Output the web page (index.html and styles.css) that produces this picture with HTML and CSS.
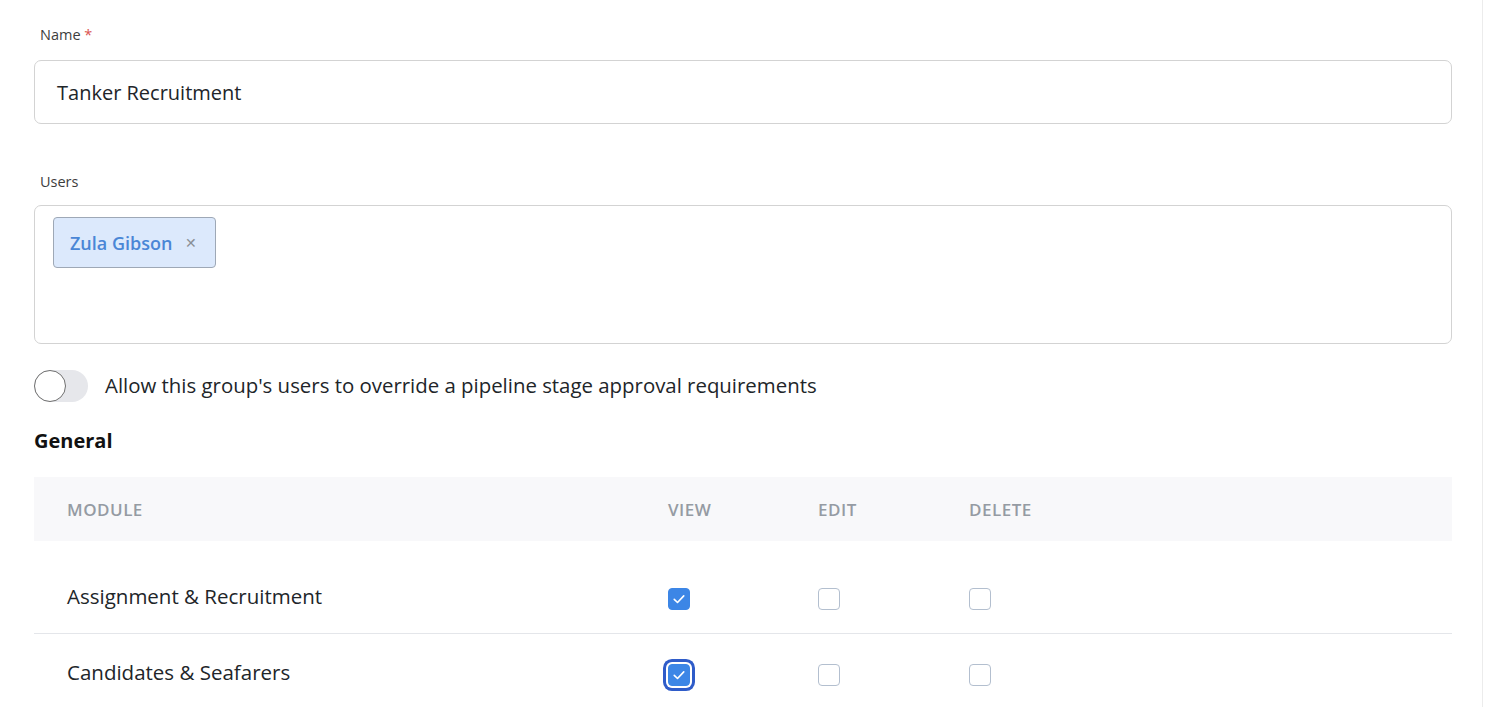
FILE: index.html
```html
<!DOCTYPE html>
<html lang="en">
<head>
<meta charset="utf-8">
<title>Group</title>
<link rel="stylesheet" href="styles.css">
</head>
<body>
<div class="page">
  <div class="form">
    <div class="field">
      <label class="label">Name <span class="req">*</span></label>
      <div class="input">Tanker Recruitment</div>
    </div>
    <div class="field field-users">
      <label class="label">Users</label>
      <div class="multi">
        <span class="chip">Zula Gibson <span class="chip-x">&#x2715;</span></span>
      </div>
    </div>
    <div class="toggle-row">
      <span class="toggle"><span class="knob"></span></span>
      <span class="toggle-text">Allow this group's users to override a pipeline stage approval requirements</span>
    </div>
    <h2 class="section">General</h2>
    <div class="table">
      <div class="row head">
        <div>MODULE</div><div>VIEW</div><div>EDIT</div><div>DELETE</div>
      </div>
      <div class="row body first">
        <div class="mod">Assignment &amp; Recruitment</div>
        <div><span class="cb checked"><svg viewBox="0 0 16 16"><path d="M4.2 8.3l2.6 2.5 5-5.3"/></svg></span></div>
        <div><span class="cb"></span></div>
        <div><span class="cb"></span></div>
      </div>
      <div class="row body">
        <div class="mod">Candidates &amp; Seafarers</div>
        <div><span class="cb checked focus"><svg viewBox="0 0 16 16"><path d="M4.2 8.3l2.6 2.5 5-5.3"/></svg></span></div>
        <div><span class="cb"></span></div>
        <div><span class="cb"></span></div>
      </div>
    </div>
  </div>
</div>
</body>
</html>
```
FILE: styles.css
```css
html, body {
  margin: 0;
  padding: 0;
  background: #ffffff;
}
body {
  font-family: "Open Sans", "Noto Sans", "Liberation Sans", sans-serif;
  color: #212529;
  overflow: hidden;
}
.page {
  width: 1483px;
  height: 707px;
  border-right: 1px solid #ececec;
  box-sizing: border-box;
}
.form {
  width: 1418px;
  margin-left: 34px;
  padding-top: 25px;
}
.label {
  display: block;
  font-size: 14.5px;
  line-height: 20px;
  color: #3d3d3d;
  margin-left: 6px;
  margin-bottom: 15px;
}
.req { color: #d9534f; }
.input {
  height: 64px;
  box-sizing: border-box;
  border: 1px solid #d3d3d3;
  border-radius: 7px;
  padding: 0 22px;
  display: flex;
  align-items: center;
  font-size: 20px;
  color: #212529;
}
.field-users { margin-top: 48px; }
.field-users .label { margin-bottom: 13px; }
.multi {
  height: 139px;
  box-sizing: border-box;
  border: 1px solid #d3d3d3;
  border-radius: 7px;
  padding: 11px 18px;
}
.chip {
  display: inline-flex;
  align-items: center;
  height: 51px;
  box-sizing: border-box;
  padding: 0 18px 0 16px;
  background: #dce9fc;
  border: 1px solid #9ea8b6;
  border-radius: 4px;
  color: #4a86d6;
  font-weight: 600;
  font-size: 18px;
}
.chip-x {
  color: #8a8f96;
  font-size: 13.5px;
  font-weight: 400;
  margin-left: 13px;
}
.toggle-row {
  display: flex;
  align-items: center;
  margin-top: 25px;
  height: 34px;
}
.toggle {
  width: 54px;
  height: 32px;
  border-radius: 16px;
  background: #e6e7eb;
  position: relative;
  flex: none;
}
.knob {
  position: absolute;
  left: 0;
  top: 0;
  width: 32px;
  height: 32px;
  box-sizing: border-box;
  border-radius: 50%;
  background: #ffffff;
  border: 1px solid #6f6f6f;
}
.toggle-text {
  margin-left: 17px;
  font-size: 20.4px;
  line-height: 28px;
  margin-top: -3px;
  color: #212529;
}
.section {
  margin: 21px 0 0 0;
  font-size: 20px;
  font-weight: 700;
  line-height: 34px;
  color: #111;
}
.table { margin-top: 19px; }
.row {
  display: grid;
  grid-template-columns: 601px 150px 151px 1fr;
  padding-left: 33px;
}
.row.head {
  height: 64px;
  align-items: center;
  background: #f8f8fa;
  font-size: 17px;
  font-weight: 600;
  color: #959ba3;
  letter-spacing: 0.5px;
}
.row.body {
  align-items: start;
  font-size: 20.5px;
  line-height: 28px;
  color: #212529;
  padding-top: 24px;
  height: 80px;
  box-sizing: border-box;
}
.row.body.first {
  padding-top: 41px;
  height: 93px;
  border-bottom: 1px solid #e4e6ea;
}
.cb {
  display: block;
  width: 22px;
  height: 22px;
  box-sizing: border-box;
  border: 1px solid #b3bfcf;
  border-radius: 4px;
  background: #fff;
  margin-top: 6px;
}
.cb.checked {
  background: #3c86e6;
  border-color: #3c86e6;
}
.cb.focus {
  box-shadow: 0 0 0 2px #ffffff, 0 0 0 5px #2f5cc9;
}
.cb svg {
  display: block;
  width: 20px;
  height: 20px;
  fill: none;
  stroke: #ffffff;
  stroke-width: 1.3;
  stroke-linecap: round;
  stroke-linejoin: round;
}
```
